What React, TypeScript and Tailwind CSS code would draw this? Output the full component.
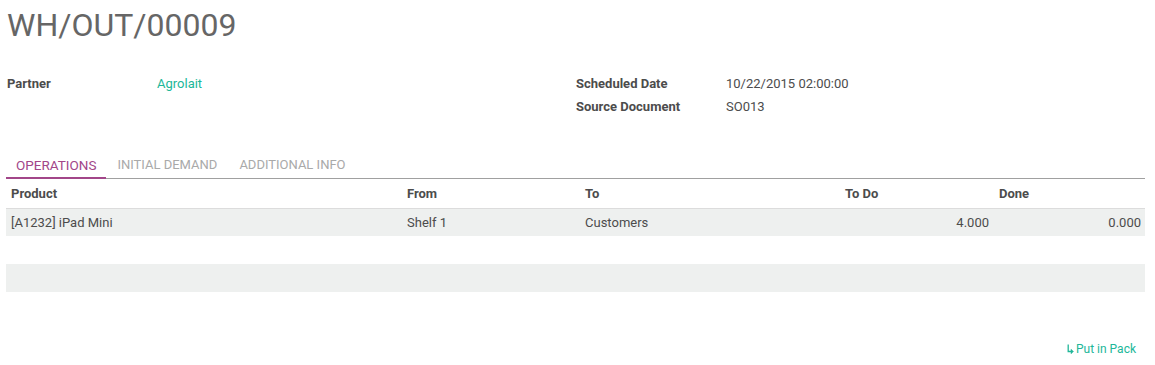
const rows = [
  { product: '[A1232] iPad Mini', from: 'Shelf 1', to: 'Customers', todo: '4.000', done: '0.000' },
];

function Field({ label, value, link }: { label: string; value: string; link?: boolean }) {
  return (
    <div className="flex h-[23px] items-center">
      <div className="w-[150px] font-bold text-[#4c4c4c]">{label}</div>
      <div className={link ? 'text-[#21b799]' : 'text-[#4c4c4c]'}>{value}</div>
    </div>
  );
}

export default function App() {
  return (
    <div className="h-[365px] w-[1155px] bg-white pl-[6px] pr-[10px] text-[13px] text-[#4c4c4c] font-['Roboto','Liberation_Sans',sans-serif]">
      <h1 className="pl-[1px] pt-[4px] text-[32px] leading-[42px] text-[#666666]">WH/OUT/00009</h1>

      <div className="mt-[26px] grid grid-cols-[569px_1fr] px-[1px]">
        <div>
          <Field label="Partner" value="Agrolait" link />
        </div>
        <div>
          <Field label="Scheduled Date" value="10/22/2015 02:00:00" />
          <Field label="Source Document" value="SO013" />
        </div>
      </div>

      <div className="mt-[37px] flex border-b border-[#a0a0a0] text-[#a9a9a9]">
        <div className="-mb-px border-b-2 border-[#a24689] px-[10px] pb-[2px] text-[13.5px] text-[#a24689]">OPERATIONS</div>
        <div className="px-[11px] pb-[3px]">INITIAL DEMAND</div>
        <div className="px-[11px] pb-[3px]">ADDITIONAL INFO</div>
      </div>

      <table className="w-full table-fixed border-collapse">
        <colgroup>
          <col className="w-[397px]" />
          <col className="w-[178px]" />
          <col className="w-[260px]" />
          <col className="w-[154px]" />
          <col />
        </colgroup>
        <thead>
          <tr className="h-[29px] border-b border-[#dcdcdc] text-left font-bold">
            <th className="px-[5px]">Product</th>
            <th className="px-[4px]">From</th>
            <th className="px-[4px]">To</th>
            <th className="px-[4px]">To Do</th>
            <th className="px-[4px]">Done</th>
          </tr>
        </thead>
        <tbody>
          {rows.map((r) => (
            <tr key={r.product} className="h-[28px] bg-[#eef0ef]">
              <td className="px-[5px]">{r.product}</td>
              <td className="px-[4px]">{r.from}</td>
              <td className="px-[4px]">{r.to}</td>
              <td className="px-[6px] text-right">{r.todo}</td>
              <td className="px-[4px] text-right">{r.done}</td>
            </tr>
          ))}
          <tr className="h-[28px]">
            <td colSpan={5}></td>
          </tr>
          <tr className="h-[28px] bg-[#eef0ef]">
            <td colSpan={5}></td>
          </tr>
        </tbody>
      </table>

      <div className="mt-[48px] flex justify-end pr-[9px]">
        <button className="flex items-center gap-[2px] text-[12px] text-[#21b799]">
          <svg width="7" height="10" viewBox="0 0 7 10" fill="none" stroke="currentColor" strokeWidth="1.3">
            <path d="M1.2 0.5v7h3.3" />
            <path d="M4 5.2l2.5 2.3-2.5 2.3z" fill="currentColor" strokeWidth="0.5" />
          </svg>
          Put in Pack
        </button>
      </div>
    </div>
  );
}
